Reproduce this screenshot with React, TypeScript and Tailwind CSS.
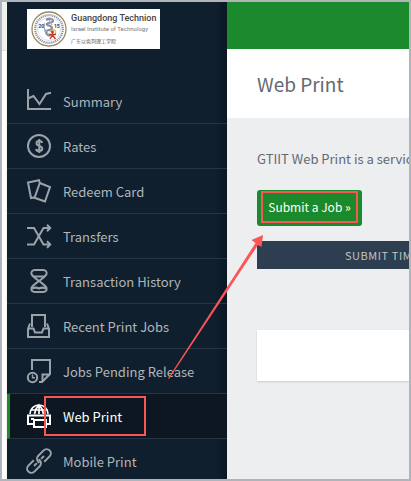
import type { ReactNode } from "react";

const sans = "font-['Noto_Sans_CJK_SC',sans-serif]";

type Item = { label: string; icon: ReactNode; active?: boolean };

const items: Item[] = [
  {
    label: "Summary",
    icon: (
      <>
        <path d="M1 0v20h23" />
        <path d="M1 9.5 6.500 7l6 8L19 5l5-1.200" />
      </>
    ),
  },
  {
    label: "Rates",
    icon: (
      <>
        <circle cx="12" cy="12" r="11" />
        <path d="M15 9c0-1.400-1.200-2-2.700-2-1.800 0-2.800.8-2.800 2.200 0 3.600 5.800 2 5.800 5.400 0 1.500-1.200 2.400-3 2.400S9.200 16.300 9 15M12.300 5v14" />
      </>
    ),
  },
  {
    label: "Redeem Card",
    icon: (
      <>
        <path d="M8 18.200 4 19 1 3.500 12 1.200 12.800 4" />
        <path d="M12.800 4 23 8 18 22.500 7.500 18.800Z" />
      </>
    ),
  },
  {
    label: "Transfers",
    icon: (
      <>
        <path d="M0 4h7l9.500 16.500H23" />
        <path d="M0 20.500h7L16.500 4H23" />
        <path d="m20 .8 3.200 3.200L20 7.200M20 17.300l3.200 3.200-3.200 3.200" />
      </>
    ),
  },
  {
    label: "Transaction History",
    icon: (
      <>
        <path d="M8 1h8c3 0 4 2 3.500 4S16 9 12 12C8 9 5 7 4.500 5S5 1 8 1Z" />
        <path d="M12 12c4 3 7 4.500 7.500 7s-.5 4-3.500 4H8c-3 0-4-1.500-3.500-4S8 15 12 12Z" />
        <path d="M6 7.500h12M5 19.500c2-1 4-1.500 7 0 3-1.500 5-1 7 0" />
      </>
    ),
  },
  {
    label: "Recent Print Jobs",
    icon: (
      <>
        <path d="M5 13V1h13v12" />
        <path d="M3 9.500 1 15v8h21v-8l-2-5.500" />
        <path d="M1 14.500h5.500l1.500 4h7l1.500-4H22" />
      </>
    ),
  },
  {
    label: "Jobs Pending Release",
    icon: (
      <>
        <path d="M5 11V1h18v14l-8 8h-3" />
        <path d="M15.500 23v-7.500H23" />
        <circle cx="5.500" cy="18.500" r="4.700" />
        <path d="M5.500 15.500v3.200H8" strokeWidth="1.400" />
      </>
    ),
  },
  {
    label: "Web Print",
    active: true,
    icon: (
      <>
        <path d="M3 10a9 9 0 0 1 18 0M12 1v9M7.500 10 9 5l3-4 3 4 1.500 5M4 6h16" strokeWidth="1.700" />
        <path d="M6 20H1v-8.500h22V20h-3" />
        <path d="M7 16h12v7H7ZM4 15h3" />
      </>
    ),
  },
  {
    label: "Mobile Print",
    icon: (
      <g transform="rotate(-45 12 12)">
        <path d="M13 10.500v1.500a4.200 4.200 0 0 1-4.200 4.200H1.200a4.200 4.200 0 0 1 0-8.400h7.600" />
        <path d="M11 13.500V12a4.200 4.200 0 0 1 4.200-4.200h7.600a4.200 4.200 0 0 1 0 8.400h-7.600" />
        <path d="M5 12h4M15 12h4" />
      </g>
    ),
  },
];

function Seal() {
  return (
    <svg viewBox="0 0 36 36" className="size-9 shrink-0" fill="none" aria-hidden="true">
      <circle cx="18" cy="18" r="17" stroke="#9b8a62" strokeWidth="1.300" />
      <circle cx="18" cy="18" r="13.800" stroke="#8a92a8" strokeWidth="2.200" strokeDasharray="1.200 .8" />
      <circle cx="18" cy="18" r="11.500" fill="#fff" stroke="#b9bfcc" strokeWidth=".5" />
      <path d="M15 9c3-2 7-1 7 1s-5 1-6 3 5 1 5 4-6 1-6 4 3 4 5 3" stroke="#8790a3" strokeWidth="2.200" />
      <path d="M14 12c-2 3 0 6 0 9M18 9l3 5M13 17l5 7" stroke="#a3abba" strokeWidth="1.200" />
      <path d="M19 21c2-5 8-1 5 2" stroke="#d6b36a" strokeWidth="1.300" />
      <path d="M21.500 20v4l-2.500 4M21.500 24l3 4M18 23.500h7" stroke="#c53b28" strokeWidth="1.400" />
      <circle cx="21.500" cy="21" r="1.400" fill="#c53b28" />
      <text x="7.500" y="17" fontSize="5" fontWeight="700" fill="#3c435c">20</text>
      <text x="23" y="17" fontSize="5" fontWeight="700" fill="#3c435c">15</text>
    </svg>
  );
}

function Sidebar() {
  return (
    <aside className="w-[220px] shrink-0 overflow-hidden bg-[#0f1f2d] bg-linear-to-l from-[#0a1723] to-[#0f1f2d] to-5%">
      <div className="flex h-[77px] items-start pt-[7px] pl-5">
        <div className="flex h-10 w-[133px] items-center gap-1 bg-white pl-1 font-['Roboto',sans-serif] whitespace-nowrap">
          <Seal />
          <div>
            <div className="text-[9px] leading-[11px] font-medium text-[#444]">Guangdong Technion</div>
            <div className="text-[6px] leading-[9px] text-[#777]">Israel Institute of Technology</div>
            <div className={`mt-1 text-[5px] leading-[8px] text-[#555] ${sans}`}>广东以色列理工学院</div>
          </div>
        </div>
      </div>
      <nav>
        {items.map((item) => (
          <a
            key={item.label}
            href="#"
            aria-current={item.active ? "page" : undefined}
            className={`flex h-[45px] items-center gap-3 border-b border-b-[#263544] text-[13px] leading-5 whitespace-nowrap ${
              item.active
                ? "border-l-[3px] border-l-[#1b8a2d] bg-[#0c1721] pl-[17px] text-white"
                : "pl-5 text-[#b0b6bb]"
            }`}
          >
            <svg
              viewBox="0 0 24 24"
              fill="none"
              stroke="currentColor"
              strokeWidth="2"
              className={`size-6 shrink-0 overflow-visible ${item.active ? "" : "text-[#9ba3aa]"}`}
              aria-hidden="true"
            >
              {item.icon}
            </svg>
            <span className="pt-0.5">{item.label}</span>
          </a>
        ))}
      </nav>
    </aside>
  );
}

export default function App() {
  return (
    <div className={`relative flex h-screen overflow-hidden border-2 border-[#b0b5bc] bg-white ${sans}`}>
      <div className="w-[5px] shrink-0 border-r border-[#f5f3ee]">
        <div className="h-[49px] border-b border-[#dddfe2] bg-[#eff0f2]" />
      </div>
      <Sidebar />
      <main className="min-w-0 flex-1 overflow-hidden bg-[#edeef0] text-[#646974]">
        <div className="h-[47px] bg-[#1b8a2d]" />
        <header className="flex h-[69px] items-center bg-white pl-[30px]">
          <h1 className="text-[19px] leading-7">Web Print</h1>
        </header>
        <div className="pt-[29px] pl-[30px]">
          <p className="text-[13px] leading-6 whitespace-nowrap">GTIIT Web Print is a service</p>
          <button
            type="button"
            className="mt-[19px] flex h-9 w-[105px] items-start rounded-[3px] bg-[#1b8a2d] pt-px pl-1 text-[12px] text-white"
          >
            <span className="flex h-8 w-[97px] items-center justify-center border-2 border-[#fb5555] whitespace-nowrap">
              Submit a Job »
            </span>
          </button>
          <table className="mt-[15px] w-full table-fixed">
            <thead>
              <tr className="h-7 bg-[#2c3e50]">
                <th className="overflow-hidden p-0 pl-[88px] text-left text-[11px] leading-4 font-normal tracking-wider whitespace-nowrap text-[#c0c5ca]">
                  SUBMIT TIME
                </th>
              </tr>
            </thead>
          </table>
          <section className="mt-[61px] h-[51px] bg-white shadow-[0_1px_2px_#00000026]" />
        </div>
      </main>
      <div className="pointer-events-none absolute top-[394px] left-[42px] h-10 w-[102px] border-2 border-[#fb5555]" />
      <svg
        viewBox="0 0 96 145"
        className="pointer-events-none absolute top-[232px] left-[165px] h-[145px] w-24"
        fill="#fb5555"
        aria-hidden="true"
      >
        <path d="M96 1 94.500 13 91 11 2 145 1 144.500 88.500 9 84.500 6Z" />
      </svg>
    </div>
  );
}
